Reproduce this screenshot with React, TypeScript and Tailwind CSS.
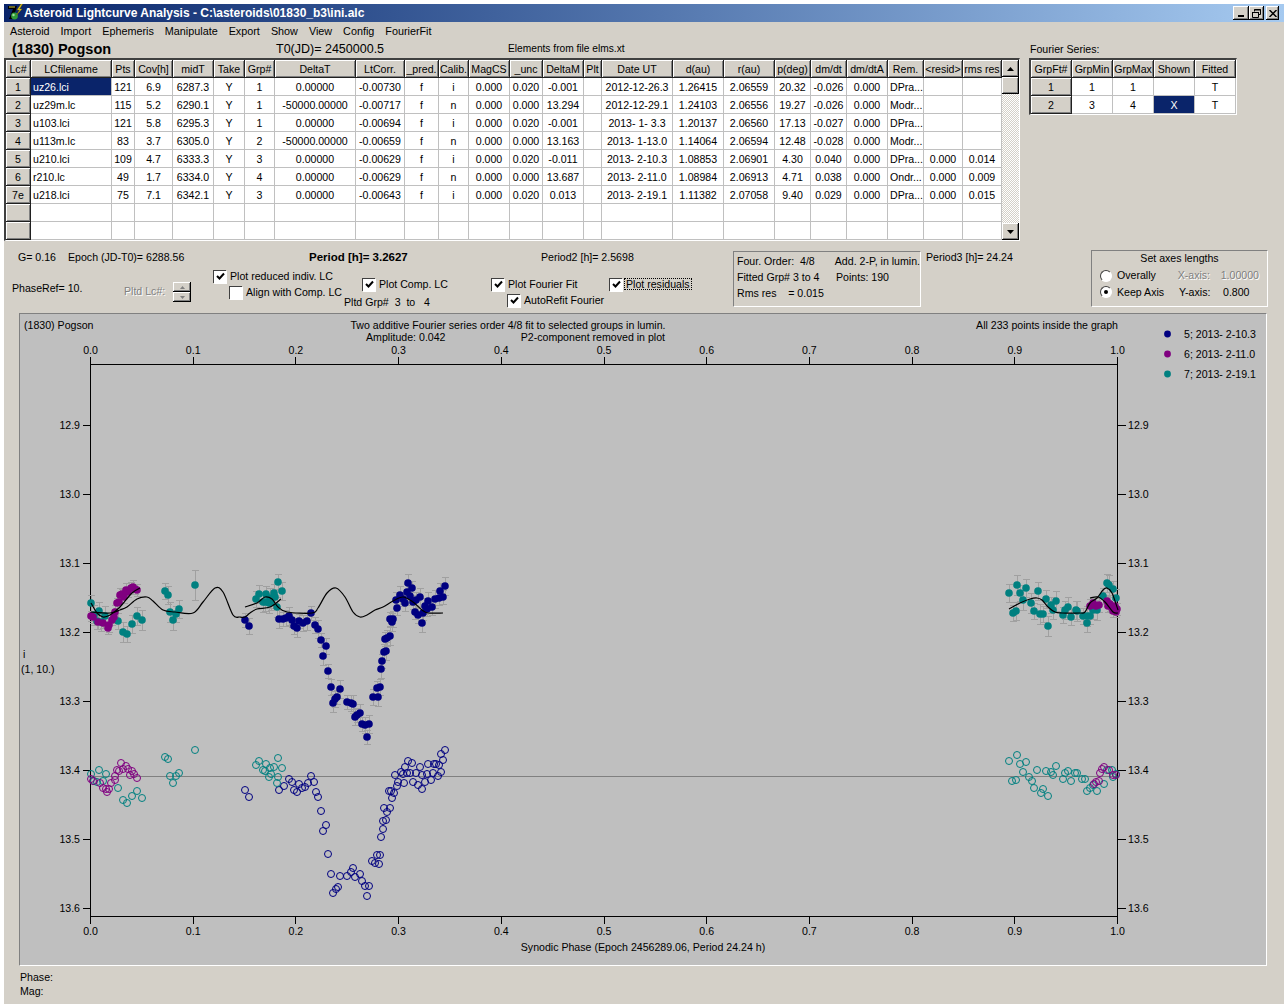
import type { ReactNode } from 'react';

type Pt = [number, number];

const raised = 'shadow-[inset_1px_1px_0_#fff,inset_-1px_-1px_0_#808080]';
const raisedDark = 'shadow-[inset_-1px_-1px_0_#000,inset_1px_1px_0_#fff,inset_-2px_-2px_0_#808080]';

const COLS = [25, 81, 23, 38, 41, 31, 30, 81, 49, 34, 30, 41, 33, 41, 18, 71, 51, 51, 36, 36, 41, 36, 39, 39];
const HEAD = ['Lc#', 'LCfilename', 'Pts', 'Cov[h]', 'midT', 'Take', 'Grp#', 'DeltaT', 'LtCorr.', '_pred.', 'Calib.', 'MagCS', '_unc', 'DeltaM', 'Plt', 'Date UT', 'd(au)', 'r(au)', 'p(deg)', 'dm/dt', 'dm/dtA', 'Rem.', '<resid>', 'rms res'];
const ROWS = [
  ['1', 'uz26.lci', '121', '6.9', '6287.3', 'Y', '1', '0.00000', '-0.00730', 'f', 'i', '0.000', '0.020', '-0.001', '', '2012-12-26.3', '1.26415', '2.06559', '20.32', '-0.026', '0.000', 'DPra...', '', ''],
  ['2', 'uz29m.lc', '115', '5.2', '6290.1', 'Y', '1', '-50000.00000', '-0.00717', 'f', 'n', '0.000', '0.000', '13.294', '', '2012-12-29.1', '1.24103', '2.06556', '19.27', '-0.026', '0.000', 'Modr...', '', ''],
  ['3', 'u103.lci', '121', '5.8', '6295.3', 'Y', '1', '0.00000', '-0.00694', 'f', 'i', '0.000', '0.020', '-0.001', '', '2013- 1- 3.3', '1.20137', '2.06560', '17.13', '-0.027', '0.000', 'DPra...', '', ''],
  ['4', 'u113m.lc', '83', '3.7', '6305.0', 'Y', '2', '-50000.00000', '-0.00659', 'f', 'n', '0.000', '0.000', '13.163', '', '2013- 1-13.0', '1.14064', '2.06594', '12.48', '-0.028', '0.000', 'Modr...', '', ''],
  ['5', 'u210.lci', '109', '4.7', '6333.3', 'Y', '3', '0.00000', '-0.00629', 'f', 'i', '0.000', '0.020', '-0.011', '', '2013- 2-10.3', '1.08853', '2.06901', '4.30', '0.040', '0.000', 'DPra...', '0.000', '0.014'],
  ['6', 'r210.lc', '49', '1.7', '6334.0', 'Y', '4', '0.00000', '-0.00629', 'f', 'n', '0.000', '0.000', '13.687', '', '2013- 2-11.0', '1.08984', '2.06913', '4.71', '0.038', '0.000', 'Ondr...', '0.000', '0.009'],
  ['7e', 'u218.lci', '75', '7.1', '6342.1', 'Y', '3', '0.00000', '-0.00643', 'f', 'i', '0.000', '0.020', '0.013', '', '2013- 2-19.1', '1.11382', '2.07058', '9.40', '0.029', '0.000', 'DPra...', '0.000', '0.015'],
  Array(24).fill(''),
  Array(24).fill(''),
];

// plot data in page pixels, read off the reference
const BLUE: Pt[] = [[245, 620], [249, 626], [279, 619], [283, 619], [286, 618], [289, 616], [292, 620], [294, 626], [297, 628], [299, 621], [303, 623], [307, 621], [311, 613], [315, 625], [318, 629], [321, 640], [326, 646], [323, 656], [328, 671], [331, 687], [340, 689], [337, 697], [335, 699], [333, 703], [347, 702], [351, 703], [353, 704], [357, 715], [355, 717], [360, 713], [362, 724], [365, 725], [369, 724], [367, 737], [373, 697], [378, 697], [377, 688], [380, 687], [381, 669], [382, 661], [384, 652], [386, 651], [385, 639], [387, 638], [390, 636], [390, 619], [393, 619], [392, 622], [397, 608], [396, 600], [400, 595], [403, 599], [405, 603], [408, 583], [412, 588], [407, 592], [410, 596], [413, 602], [416, 600], [420, 597], [415, 612], [418, 615], [422, 623], [423, 613], [425, 606], [428, 601], [427, 609], [432, 607], [435, 599], [439, 598], [440, 591], [445, 586], [443, 597]];
const BLUE_O: Pt[] = [[245, 790], [249, 797], [279, 790], [284, 786], [289, 779], [292, 782], [294, 790], [297, 792], [299, 784], [302, 788], [305, 787], [308, 783], [311, 776], [314, 782], [316, 792], [318, 797], [321, 811], [326, 825], [323, 831], [328, 854], [331, 874], [340, 876], [338, 887], [336, 889], [333, 893], [347, 876], [351, 872], [353, 868], [355, 877], [360, 874], [362, 881], [365, 886], [369, 886], [367, 896], [372, 861], [375, 863], [379, 864], [377, 855], [380, 855], [381, 837], [383, 829], [383, 821], [386, 820], [384, 808], [387, 812], [390, 808], [389, 791], [391, 791], [394, 793], [392, 798], [395, 775], [398, 782], [397, 786], [401, 772], [403, 774], [404, 783], [405, 767], [408, 761], [412, 763], [407, 773], [410, 773], [413, 782], [416, 773], [420, 767], [418, 785], [422, 789], [422, 775], [425, 782], [427, 774], [428, 764], [431, 780], [433, 773], [434, 764], [436, 764], [438, 776], [441, 772], [439, 765], [443, 760], [441, 754], [445, 750]];
const TEAL: Pt[] = [[91, 603], [99, 611], [94, 615], [97, 621], [101, 622], [105, 616], [118, 621], [132, 624], [123, 632], [127, 634], [137, 616], [142, 620], [165, 591], [168, 595], [170, 612], [176, 614], [179, 609], [173, 620], [256, 599], [259, 594], [263, 602], [266, 594], [265, 602], [270, 598], [271, 602], [274, 593], [277, 607], [278, 582], [282, 591], [269, 603], [275, 597], [1009, 593], [1017, 585], [1020, 593], [1026, 588], [1023, 600], [1013, 613], [1016, 611], [1031, 603], [1034, 611], [1038, 591], [1040, 614], [1043, 614], [1046, 599], [1048, 626], [1051, 605], [1053, 610], [1056, 601], [1063, 615], [1065, 610], [1068, 607], [1071, 617], [1076, 610], [1077, 611], [1083, 616], [1087, 623], [1087, 616], [1090, 616], [1093, 610], [1097, 610], [1103, 596], [1107, 583], [1109, 585], [1113, 589], [1116, 598]];
const TEAL_O: Pt[] = [[91, 774], [99, 770], [94, 781], [97, 782], [103, 781], [106, 774], [118, 788], [132, 796], [123, 800], [127, 803], [137, 791], [142, 798], [165, 757], [168, 759], [170, 776], [176, 776], [179, 773], [173, 783], [195, 750], [256, 765], [259, 761], [263, 770], [266, 764], [265, 771], [270, 768], [271, 774], [274, 767], [278, 777], [278, 758], [282, 768], [269, 777], [277, 783], [1009, 761], [1017, 755], [1020, 764], [1026, 762], [1023, 772], [1012, 781], [1016, 780], [1029, 777], [1032, 781], [1037, 770], [1034, 788], [1043, 789], [1041, 793], [1046, 771], [1048, 796], [1051, 772], [1053, 775], [1056, 766], [1063, 779], [1065, 773], [1068, 771], [1071, 781], [1075, 773], [1077, 773], [1082, 779], [1085, 779], [1087, 791], [1090, 788], [1093, 785], [1097, 791], [1104, 784], [1107, 770], [1112, 770], [1116, 774], [1113, 777]];
const PURPLE: Pt[] = [[91, 616], [93, 617], [98, 622], [103, 623], [108, 628], [109, 625], [112, 620], [114, 617], [115, 612], [117, 603], [119, 602], [120, 595], [122, 594], [124, 597], [126, 590], [128, 592], [131, 588], [133, 587], [135, 589], [137, 590], [1090, 606], [1093, 603], [1096, 606], [1099, 605], [1107, 601], [1108, 606], [1110, 604], [1112, 608], [1113, 611], [1115, 606], [1116, 612], [1117, 609]];
const PURPLE_O: Pt[] = [[91, 779], [93, 781], [100, 783], [103, 788], [106, 789], [107, 792], [109, 789], [111, 783], [115, 780], [115, 776], [117, 770], [119, 771], [121, 763], [126, 766], [123, 769], [128, 769], [130, 775], [132, 771], [134, 774], [137, 778], [1096, 782], [1094, 784], [1099, 781], [1100, 773], [1102, 769], [1104, 767], [1109, 770], [1113, 775], [1116, 775]];

const CURVES: Pt[][] = [
  [[91, 612], [110, 613], [120, 610], [127, 607], [137, 599], [147, 597], [153, 601], [163, 610], [175, 612], [193, 613], [203, 602], [215, 588], [223, 592], [233, 615], [240, 617], [245, 617], [250, 613], [257, 609], [270, 607], [281, 599]],
  [[91, 603], [97, 613], [103, 617], [110, 615], [120, 607], [132, 593], [140, 588]],
  [[245, 607], [257, 603], [265, 597], [272, 599], [278, 607], [287, 612], [312, 613], [318, 608], [327, 593], [336, 588], [345, 597], [353, 612], [360, 617], [367, 615], [375, 610], [383, 607], [393, 601], [403, 597], [413, 602], [422, 610], [428, 613], [443, 613]],
  [[1009, 609], [1020, 603], [1030, 599], [1037, 598], [1042, 600], [1048, 607], [1055, 612], [1062, 613], [1080, 613], [1085, 612], [1090, 603], [1097, 598], [1103, 590], [1107, 588], [1112, 593], [1118, 610]],
  [[1090, 598], [1098, 597], [1105, 602], [1113, 612], [1118, 613]],
];

const X_TICKS = ['0.0', '0.1', '0.2', '0.3', '0.4', '0.5', '0.6', '0.7', '0.8', '0.9', '1.0'];
const Y_TICKS: [string, number][] = [['12.9', 425], ['13.0', 494], ['13.1', 563], ['13.2', 632], ['13.3', 701], ['13.4', 770], ['13.5', 839], ['13.6', 908]];
const LEGEND: [string, string, number][] = [['#000080', '5; 2013- 2-10.3', 334], ['#800080', '6; 2013- 2-11.0', 354], ['#008080', '7; 2013- 2-19.1', 374]];

function smooth(p: Pt[]) {
  let d = `M${p[0][0]} ${p[0][1]}`;
  for (let i = 0; i < p.length - 1; i++) {
    const a = p[Math.max(i - 1, 0)];
    const b = p[i];
    const c = p[i + 1];
    const e = p[Math.min(i + 2, p.length - 1)];
    d += `C${b[0] + (c[0] - a[0]) / 6} ${b[1] + (c[1] - a[1]) / 6} ${c[0] - (e[0] - b[0]) / 6} ${c[1] - (e[1] - b[1]) / 6} ${c[0]} ${c[1]}`;
  }
  return d;
}

function Whiskers({ pts, size }: { pts: Pt[]; size: number }) {
  return (
    <g stroke="#a0a0a0" strokeWidth="1" shapeRendering="crispEdges">
      {pts.map(([x, y], i) => {
        const r = x === 195 ? 15 : size + (i % 3);
        return <path key={i} d={`M${x} ${y - r}V${y + r}M${x - 3} ${y - r}H${x + 4}M${x - 3} ${y + r}H${x + 4}`} />;
      })}
    </g>
  );
}

function Dots({ pts, color }: { pts: Pt[]; color: string }) {
  return (
    <g fill={color}>
      {pts.map(([x, y], i) => <circle key={i} cx={x} cy={y} r="3.8" />)}
    </g>
  );
}

function Rings({ pts, color }: { pts: Pt[]; color: string }) {
  return (
    <g fill="none" stroke={color} strokeWidth="1">
      {pts.map(([x, y], i) => <circle key={i} cx={x} cy={y} r="3.5" />)}
    </g>
  );
}

function Chart() {
  return (
    <svg viewBox="20 314 1246 651" className="block h-[651px] w-[1246px] text-[10.6px]" fill="#000">
      <text x="24" y="329">(1830) Pogson</text>
      <text x="508" y="329" textAnchor="middle">Two additive Fourier series order 4/8 fit to selected groups in lumin.</text>
      <text x="366" y="341">Amplitude: 0.042</text>
      <text x="665" y="341" textAnchor="end">P2-component removed in plot</text>
      <text x="1118" y="329" textAnchor="end">All 233 points inside the graph</text>
      <text x="23" y="658">i</text>
      <text x="21" y="673">(1, 10.)</text>
      <text x="643" y="951" textAnchor="middle">Synodic Phase (Epoch 2456289.06, Period 24.24 h)</text>

      {LEGEND.map(([c, label, y]) => (
        <g key={label}>
          <circle cx="1167.5" cy={y} r="3.4" fill={c} />
          <text x="1184" y={y + 4}>{label}</text>
        </g>
      ))}

      <g stroke="#000" strokeWidth="1" shapeRendering="crispEdges" fill="none">
        <rect x="90.5" y="364.5" width="1027" height="552" />
        {X_TICKS.map((_, i) => {
          const x = Math.round(90 + i * 102.7) + 0.5;
          return <path key={i} d={`M${x} 357V364M${x} 917V924`} />;
        })}
        {Y_TICKS.map(([l, y]) => <path key={l} d={`M83 ${y + 0.5}H90M1118 ${y + 0.5}H1126`} />)}
      </g>
      {X_TICKS.map((l, i) => (
        <g key={l} textAnchor="middle">
          <text x={90.5 + i * 102.7} y="354">{l}</text>
          <text x={90.5 + i * 102.7} y="935">{l}</text>
        </g>
      ))}
      {Y_TICKS.map(([l, y]) => (
        <g key={l}>
          <text x="80" y={y + 4} textAnchor="end">{l}</text>
          <text x="1128" y={y + 4}>{l}</text>
        </g>
      ))}

      <path d="M91 776.5H1117" stroke="#808080" strokeWidth="1" shapeRendering="crispEdges" />

      <Whiskers pts={BLUE} size={7} />
      <Whiskers pts={TEAL} size={8} />
      <Whiskers pts={[[195, 585]]} size={15} />
      <Whiskers pts={PURPLE} size={5} />
      <Dots pts={BLUE} color="#000080" />
      <Dots pts={[...TEAL, [195, 585]]} color="#008080" />
      <Dots pts={PURPLE} color="#800080" />
      <g fill="none" stroke="#000" strokeWidth="1.2">
        {CURVES.map((c, i) => <path key={i} d={smooth(c)} />)}
      </g>
      <Rings pts={BLUE_O} color="#000080" />
      <Rings pts={TEAL_O} color="#008080" />
      <Rings pts={PURPLE_O} color="#800080" />
    </svg>
  );
}

function HeadCell({ children }: { children?: ReactNode }) {
  return (
    <th className={`h-[18px] overflow-hidden whitespace-nowrap border-r border-b border-[#202020] bg-[#d4d0c8] p-0 pt-px text-center font-normal ${raised}`}>
      {children}
    </th>
  );
}

function Cell({ children, left, on }: { children?: ReactNode; left?: boolean; on?: boolean }) {
  return (
    <td className={`h-[18px] overflow-hidden whitespace-pre border-r border-b border-[#c0c0c0] p-0 pt-px ${left ? 'pl-[2px] text-left' : 'text-center'} ${on ? 'bg-[#0a246a] text-white' : 'bg-white'}`}>
      {children}
    </td>
  );
}

function LcGrid() {
  return (
    <div className="flex h-[183px] w-[1016px] border-t-2 border-l-2 border-b border-r border-t-[#404040] border-l-[#404040] border-b-white border-r-white">
      <table className="w-[996px] table-fixed border-separate border-spacing-0">
        <colgroup>
          {COLS.map((w, i) => <col key={i} style={{ width: w }} />)}
        </colgroup>
        <thead>
          <tr>{HEAD.map(h => <HeadCell key={h}>{h}</HeadCell>)}</tr>
        </thead>
        <tbody>
          {ROWS.map((row, r) => (
            <tr key={r}>
              {row.map((v: string, c: number) =>
                c === 0 ? (
                  <HeadCell key={c}>{v}</HeadCell>
                ) : (
                  <Cell key={c} left={c === 1 || c === 21} on={r === 0 && c === 1}>{v}</Cell>
                )
              )}
            </tr>
          ))}
        </tbody>
      </table>
      <div className="flex h-[180px] w-[17px] flex-col">
        <ScrollBtn up />
        <div className={`h-[17px] shrink-0 bg-[#d4d0c8] ${raisedDark}`} />
        <div className="flex-1 bg-[repeating-conic-gradient(#d4d0c8_0_25%,#ffffff_0_50%)] [background-size:2px_2px]" />
        <ScrollBtn />
      </div>
    </div>
  );
}

function ScrollBtn({ up }: { up?: boolean }) {
  return (
    <div className={`flex h-[17px] shrink-0 items-center justify-center bg-[#d4d0c8] ${raisedDark}`}>
      <svg width="7" height="4" viewBox="0 0 7 4">
        <path d={up ? 'M3.5 0L7 4H0Z' : 'M0 0H7L3.5 4Z'} fill="#000" />
      </svg>
    </div>
  );
}

function FourierGrid() {
  const rows = [['1', '1', '1', '', 'T'], ['2', '3', '4', 'X', 'T']];
  return (
    <div className="h-[57px] w-[208px] border-t-2 border-l-2 border-b border-r border-t-[#404040] border-l-[#404040] border-b-white border-r-white">
      <table className="w-[205px] table-fixed border-separate border-spacing-0">
        <thead>
          <tr>{['GrpFt#', 'GrpMin', 'GrpMax', 'Shown', 'Fitted'].map(h => <HeadCell key={h}>{h}</HeadCell>)}</tr>
        </thead>
        <tbody>
          {rows.map(row => (
            <tr key={row[0]}>
              {row.map((v, c) =>
                c === 0 ? <HeadCell key={c}>{v}</HeadCell> : <Cell key={c} on={v === 'X'}>{v}</Cell>
              )}
            </tr>
          ))}
        </tbody>
      </table>
    </div>
  );
}

function Check({ label, checked = true, focus }: { label: string; checked?: boolean; focus?: boolean }) {
  return (
    <div className="flex h-[14px] items-center whitespace-nowrap">
      <span className="flex h-[13px] w-[13px] shrink-0 items-center justify-center border-t border-l border-t-[#404040] border-l-[#404040] bg-white shadow-[1px_1px_0_#fff]">
        {checked && (
          <svg width="9" height="9" viewBox="0 0 9 9">
            <path d="M1 4L3.5 6.5L8 1.5" fill="none" stroke="#000" strokeWidth="2" />
          </svg>
        )}
      </span>
      <span className={`ml-[3px] px-[1px] ${focus ? 'outline-1 outline-dotted outline-black' : ''}`}>{label}</span>
    </div>
  );
}

function Radio({ on }: { on?: boolean }) {
  return (
    <span className="flex h-[12px] w-[12px] shrink-0 items-center justify-center rounded-full border border-t-[#404040] border-l-[#404040] border-r-white border-b-white bg-white">
      {on && <span className="h-[4px] w-[4px] rounded-full bg-black" />}
    </span>
  );
}

function Controls() {
  return (
    <div className="flex h-[72px]">
      <div className="w-[729px] pl-[8px]">
        <div className="flex h-[25px] items-end pb-[3px] pl-[6px]">
          <span className="w-[50px]">G= 0.16</span>
          <span className="w-[241px]">Epoch (JD-T0)= 6288.56</span>
          <span className="w-[232px] text-[11.5px] font-bold">Period [h]= 3.2627</span>
          <span>Period2 [h]= 2.5698</span>
        </div>
        <div className="flex">
          <div className="w-[112px] pt-[17px]">PhaseRef= 10.</div>
          <div className="flex w-[89px] items-start pt-[16px]">
            <span className="pt-[4px] text-[#808080] [text-shadow:1px_1px_0_#fff]">Pltd Lc#:</span>
            <div className="ml-[8px] flex h-[20px] w-[18px] flex-col">
              <div className={`flex h-[10px] items-center justify-center bg-[#d4d0c8] ${raisedDark}`}>
                <svg width="5" height="3" viewBox="0 0 5 3"><path d="M2.5 0L5 3H0Z" fill="#808080" /></svg>
              </div>
              <div className={`flex h-[10px] items-center justify-center bg-[#d4d0c8] ${raisedDark}`}>
                <svg width="5" height="3" viewBox="0 0 5 3"><path d="M0 0H5L2.5 3Z" fill="#808080" /></svg>
              </div>
            </div>
          </div>
          <div className="w-[131px] pt-[3px]">
            <Check label="Plot reduced indiv. LC" />
            <div className="ml-[16px] mt-[2px]"><Check label="Align with Comp. LC" checked={false} /></div>
          </div>
          <div className="w-[147px] pt-[11px]">
            <div className="ml-[18px]"><Check label="Plot Comp. LC" /></div>
            <div className="mt-[6px]">Pltd Grp#&nbsp; 3&nbsp; to&nbsp;&nbsp; 4</div>
          </div>
          <div className="w-[118px] pt-[11px]">
            <Check label="Plot Fourier Fit" />
            <div className="ml-[16px] mt-[2px]"><Check label="AutoRefit Fourier" /></div>
          </div>
          <div className="pt-[11px]"><Check label="Plot residuals" focus /></div>
        </div>
      </div>
      <div className="mt-[10px] flex h-[56px] w-[188px] flex-col gap-[1px] border border-t-[#808080] border-l-[#808080] border-r-white border-b-white pl-[3px] pt-[2px]">
        <div className="flex h-[15px] items-center whitespace-nowrap"><span className="w-[99px]">Four. Order:&nbsp; 4/8</span><span>Add. 2-P, in lumin.</span></div>
        <div className="flex h-[15px] items-center whitespace-nowrap"><span className="w-[99px]">Fitted Grp# 3 to 4</span><span>Points: 190</span></div>
        <div className="flex h-[15px] items-center whitespace-pre">Rms res    = 0.015</div>
      </div>
      <div className="ml-[5px] w-[165px] pt-[11px]">Period3 [h]= 24.24</div>
      <div className="mt-[9px] h-[57px] w-[177px] border border-t-[#808080] border-l-[#808080] border-r-white border-b-white px-[8px]">
        <div className="h-[15px] text-center leading-[15px]">Set axes lengths</div>
        <div className="mt-[1px] flex h-[17px] items-center whitespace-nowrap">
          <Radio />
          <span className="ml-[5px] w-[62px]">Overally</span>
          <span className="w-[44px] text-[#808080] [text-shadow:1px_1px_0_#fff]">X-axis:</span>
          <span className="text-[#808080] [text-shadow:1px_1px_0_#fff]">1.00000</span>
        </div>
        <div className="flex h-[16px] items-center whitespace-nowrap">
          <Radio on />
          <span className="ml-[5px] w-[62px]">Keep Axis</span>
          <span className="w-[44px]">Y-axis:</span>
          <span>0.800</span>
        </div>
      </div>
    </div>
  );
}

function Logo() {
  return (
    <svg width="18" height="18" viewBox="0 0 18 18" className="shrink-0">
      <path d="M2 2H11L7 15H3L7 5H2Z" fill="#000" />
      <path d="M3 3H9" stroke="#d8d040" strokeWidth="1" />
      <circle cx="8.5" cy="12" r="3.4" fill="#2f9a3a" />
      <circle cx="7.5" cy="11" r="1.2" fill="#a0e0a0" />
      <path d="M15 0L11 6H13.5L10.5 11L16 5H13.5L16.5 0Z" fill="#f0e020" stroke="#806000" strokeWidth="0.5" />
    </svg>
  );
}

function WinBtn({ children, className }: { children: ReactNode; className?: string }) {
  return (
    <div className={`flex h-[14px] items-center justify-center bg-[#d4d0c8] ${raisedDark} ${className ?? ''}`}>
      {children}
    </div>
  );
}

export default function App() {
  return (
    <div className="h-[1004px] w-[1288px] overflow-hidden bg-white pl-[4px] pt-[4px] font-[Liberation_Sans,Arial,sans-serif] text-[10.6px] leading-none text-black">
      <div className="h-[1000px] w-[1280px] bg-[#d4d0c8]">
        {/* Title bar */}
        <div className="flex h-[18px] items-center bg-gradient-to-r from-[#0a246a] to-[#a6caf0] pl-[2px] pr-[5px]">
          <Logo />
          <span className="text-[12px] font-bold text-white">Asteroid Lightcurve Analysis - C:\asteroids\01830_b3\ini.alc</span>
          <div className="ml-auto flex">
            <WinBtn className="w-[16px]"><span className="mt-[6px] h-[2px] w-[6px] bg-black" /></WinBtn>
            <WinBtn className="w-[15px]">
              <svg width="9" height="9" viewBox="0 0 9 9"><path d="M2.5 2.5V.5H8.5V5.5H6.5M.5 3.5H6.5V8.5H.5Z" fill="none" stroke="#000" /><path d="M2 1H9M0 3.5H7" stroke="#000" /></svg>
            </WinBtn>
            <WinBtn className="ml-[2px] w-[13px]">
              <svg width="8" height="7" viewBox="0 0 8 7"><path d="M0.5 0L7.5 7M7.5 0L0.5 7" stroke="#000" strokeWidth="1.5" /></svg>
            </WinBtn>
          </div>
        </div>

        {/* Menu */}
        <div className="flex h-[19px] items-center pl-[6px] text-[10.8px]">
          {['Asteroid', 'Import', 'Ephemeris', 'Manipulate', 'Export', 'Show', 'View', 'Config', 'FourierFit'].map(m => (
            <span key={m} className="mr-[11px]">{m}</span>
          ))}
        </div>

        <div className="flex">
          <div>
            <div className="flex h-[17px] items-center">
              <span className="ml-[8px] w-[264px] text-[14.5px] font-bold">(1830) Pogson</span>
              <span className="w-[232px] text-[12.5px]">T0(JD)= 2450000.5</span>
              <span className="text-[10.2px]">Elements from file elms.xt</span>
            </div>
            <LcGrid />
          </div>
          <div className="ml-[9px]">
            <div className="flex h-[17px] items-center pl-[1px]">Fourier Series:</div>
            <FourierGrid />
          </div>
        </div>

        <Controls />

        {/* Plot panel */}
        <div className="ml-[15px] h-[653px] w-[1248px] border-t border-l border-t-[#808080] border-l-[#808080] border-b border-r border-b-white border-r-white bg-[#bfbfbf]">
          <Chart />
        </div>

        <div className="flex h-[34px] flex-col gap-[3px] pl-[16px] pt-[6px]">
          <span className="h-[11px]">Phase:</span>
          <span className="h-[11px]">Mag:</span>
        </div>
      </div>
      <div className="h-px w-[1280px] bg-white" />
      <div className="h-[3px] w-[1280px] bg-[#d4d0c8]" />
    </div>
  );
}
